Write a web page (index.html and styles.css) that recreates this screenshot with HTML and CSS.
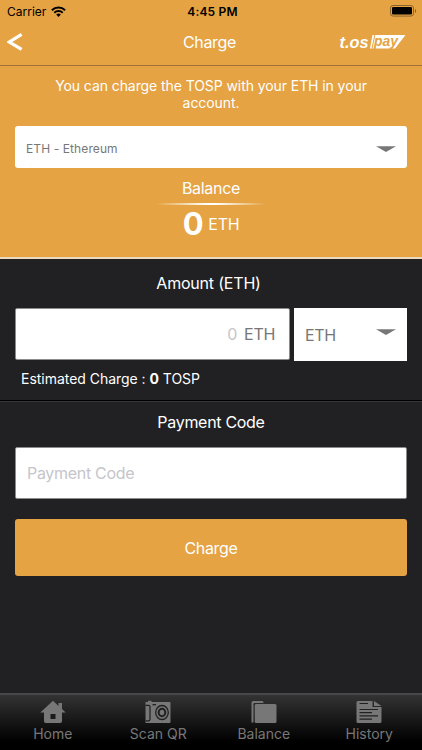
FILE: index.html
```html
<!DOCTYPE html>
<html lang="en">
<head>
  <meta charset="UTF-8">
  <meta name="viewport" content="width=device-width, initial-scale=1">
  <title>Charge</title>
  <link rel="stylesheet" href="styles.css">
</head>
<body>

<div class="status-bar">
  <div class="carrier">
    <span>Carrier</span>
    <svg class="wifi" width="15" height="11" viewBox="0 0 15 11" fill="none" stroke="#000">
      <path d="M0.9 4.2a9.4 9.4 0 0 1 13.2 0" stroke-width="2"/>
      <path d="M3.3 6.7a6 6 0 0 1 8.4 0" stroke-width="1.9"/>
      <path d="M5.2 8.6a3.3 3.3 0 0 1 4.6 0L7.5 10.9z" fill="#000" stroke="none"/>
    </svg>
  </div>
  <div class="time">4:45 PM</div>
  <div class="battery">
    <svg width="27" height="12" viewBox="0 0 27 12">
      <rect x="0.5" y="0.5" width="23" height="10.6" rx="2.6" fill="none" stroke="#8a632c"/>
      <rect x="2" y="2" width="20" height="7.6" rx="1.3" fill="#000"/>
      <path d="M25 4v4c1.6-.6 1.6-3.4 0-4z" fill="#8a632c"/>
    </svg>
  </div>
</div>

<header class="nav-bar">
  <button class="back" aria-label="Back">
    <svg width="16" height="18" viewBox="0 0 16 18">
      <path d="M14.6 1.4L2.4 9l12.2 7.4" fill="none" stroke="#fff" stroke-width="3.2"/>
    </svg>
  </button>
  <h1>Charge</h1>
  <svg class="logo" width="68" height="24" viewBox="0 0 68 24">
    <path d="M33.500 5H66.500L56 18.500H31z" fill="#fff"/>
    <path d="M35.800 5L33 18.500" stroke="#e5a343" stroke-width="1"/>
    <text class="logo-name" x="0.500" y="18" textLength="29" lengthAdjust="spacingAndGlyphs">t.os</text>
    <text class="logo-pay" x="35" y="15.800" textLength="24" lengthAdjust="spacingAndGlyphs">pay</text>
  </svg>
</header>

<section class="hero">
  <p class="intro">You can charge the TOSP with your ETH in your account.</p>
  <div class="coin-select">
    <span>ETH - Ethereum</span>
    <svg width="20" height="6" viewBox="0 0 20 6"><path d="M0 0.300h20L10 6z" fill="#777"/></svg>
  </div>
  <div class="balance-title">Balance</div>
  <div class="shine"></div>
  <div class="balance"><b>0</b><span>ETH</span></div>
</section>

<section class="amount">
  <h2>Amount (ETH)</h2>
  <div class="amount-row">
    <div class="field amount-field"><span class="placeholder">0</span><span>ETH</span></div>
    <div class="unit-select">
      <span>ETH</span>
      <svg width="20" height="6" viewBox="0 0 20 6"><path d="M0 0.300h20L10 6z" fill="#777"/></svg>
    </div>
  </div>
  <p class="estimate">Estimated Charge : <b>0</b> TOSP</p>
</section>

<section class="payment">
  <h2>Payment Code</h2>
  <div class="field code-field"><span class="placeholder">Payment Code</span></div>
  <button class="charge-button">Charge</button>
</section>

<nav class="tab-bar">
  <a class="tab">
    <svg width="26" height="24" viewBox="0 0 26 24" fill="#777">
      <path d="M13 0.800L0.300 12.500H4V21.200q0 1.800 1.800 1.800H20.200q1.800 0 1.800-1.800V12.500H25.700L22 9V3H18.500V6z"/>
      <path d="M10.500 14h5v5h-5z" fill="#1b1b1b"/>
    </svg>
    <span>Home</span>
  </a>
  <a class="tab">
    <svg width="26" height="24" viewBox="0 0 26 24" fill="#777">
      <path d="M2 2h1V0.700h3.500V2H24.500q1 0 1 1V22q0 1-1 1H0.500V2z"/>
      <g fill="none" stroke="#202020">
        <path d="M0.500 5.300H3.600q1.400 0 1.400 1.400V19.300q0 1.600-1.600 1.600H0.500" stroke-width="1.200"/>
        <path d="M7.500 4.700h3.500" stroke-width="1.300"/>
        <ellipse cx="17" cy="12.500" rx="6.300" ry="7" stroke-width="1.300"/>
        <ellipse cx="17" cy="12.500" rx="3.300" ry="3.800" stroke-width="2"/>
      </g>
    </svg>
    <span>Scan QR</span>
  </a>
  <a class="tab">
    <svg width="26" height="24" viewBox="0 0 26 24" fill="#777">
      <path d="M0.500 22.500V2.500q0-1.500 1.500-1.500H11q1.500 0 1.500 1.500V3H3.500q-1 0-1 1V22.500z"/>
      <path d="M5 4H24q1.500 0 1.500 1.500V21.500q0 1.500-1.500 1.500H5q-1.300 0-1.300-1.500V5.500Q3.700 4 5 4z"/>
    </svg>
    <span>Balance</span>
  </a>
  <a class="tab">
    <svg width="26" height="24" viewBox="0 0 26 24" fill="#777">
      <path d="M2 1H16.500V7H25.500V21.500q0 1.500-1.500 1.500H2Q0.500 23 0.500 21.500V2.500Q0.500 1 2 1z"/>
      <path d="M18 1L25.500 6H18z"/>
      <g fill="none" stroke="#202020" stroke-width="1.200">
        <path d="M3.500 3.500H12M3.500 9.500H22M3.500 12.700H16M3.500 15.900H22M3.500 19.100H16"/>
      </g>
    </svg>
    <span>History</span>
  </a>
</nav>

</body>
</html>
```
FILE: styles.css
```css
* {
  box-sizing: border-box;
}
body {
  margin: 0;
  width: 422px;
  height: 750px;
  display: flex;
  flex-direction: column;
  overflow: hidden;
  background: #212124;
  color: #fff;
  font-family: Inter, "Liberation Sans", sans-serif;
  font-size: 16px;
  letter-spacing: -0.3px;
}
h1, h2, p {
  margin: 0;
  font-weight: 400;
}
button {
  border: none;
  padding: 0;
  font: inherit;
  color: inherit;
  letter-spacing: inherit;
}
.status-bar {
  height: 22px;
  display: grid;
  grid-template-columns: 1fr auto 1fr;
  align-items: center;
  padding: 0 5px 0 7px;
  background: #e5a343;
  color: #000;
  font-size: 12px;
}
.carrier {
  display: flex;
  align-items: center;
  gap: 5px;
  letter-spacing: 0;
}
.time {
  font-weight: 600;
  padding-left: 1px;
  letter-spacing: 0.2px;
}
.battery {
  display: flex;
  justify-content: flex-end;
}
.nav-bar {
  height: 44px;
  display: grid;
  grid-template-columns: 1fr auto 1fr;
  align-items: center;
  padding: 0 15px 3px 7px;
  background: #e5a343;
  border-bottom: 1px solid #9d7232;
}
.nav-bar h1 {
  font-size: 16px;
  padding-left: 5px;
}
.back {
  display: flex;
  width: 30px;
  background: none;
}
.logo {
  justify-self: end;
}
.logo-name {
  font: italic 700 17px "Liberation Sans", sans-serif;
  letter-spacing: 0;
  fill: #fff;
}
.logo-pay {
  font: italic 700 14px "Liberation Sans", sans-serif;
  letter-spacing: 0;
  fill: #e5a343;
}
.hero {
  height: 193px;
  padding: 11px 15px 0;
  background: #e5a343;
  border-bottom: 2px solid #ead9bd;
  text-align: center;
}
.intro {
  padding: 0 35px;
  font-size: 14px;
  line-height: 17px;
  letter-spacing: -0.08px;
}
.coin-select {
  height: 42px;
  margin-top: 15px;
  padding: 3px 11px 0;
  display: flex;
  align-items: center;
  justify-content: space-between;
  background: #fff;
  border-radius: 3px;
  color: #777;
  font-size: 12px;
  letter-spacing: 0.1px;
}
.balance-title {
  margin-top: 10px;
  line-height: 20px;
}
.shine {
  width: 110px;
  height: 2px;
  margin: 5px auto 0;
  background: linear-gradient(90deg, transparent, #fff 45%, #fff 55%, transparent);
}
.balance {
  display: flex;
  justify-content: center;
  align-items: center;
  gap: 5px;
  height: 37px;
}
.balance b {
  font-size: 31px;
}
.amount {
  height: 142px;
  padding: 14px 15px 0;
  border-bottom: 1px solid #000;
}
h2 {
  font-size: 16px;
  line-height: 20px;
  text-align: center;
}
.amount h2 {
  padding-right: 5px;
  letter-spacing: -0.2px;
}
.amount-row {
  display: flex;
  gap: 4px;
  margin-top: 15px;
}
.field {
  display: flex;
  align-items: center;
  height: 52px;
  background: #fff;
  border: 1px solid #8b8b8b;
  border-radius: 2px;
  color: #777;
}
.placeholder {
  color: #c5c5ca;
}
.amount-field {
  flex: 1;
  justify-content: flex-end;
  gap: 7px;
  padding-right: 14px;
}
.unit-select {
  width: 113px;
  height: 53px;
  padding: 0 11px;
  display: flex;
  align-items: center;
  justify-content: space-between;
  background: #fff;
  color: #777;
}
.unit-select svg {
  margin-bottom: 6px;
}
.estimate {
  margin-top: 9px;
  padding-left: 6px;
  font-size: 14px;
  line-height: 18px;
  letter-spacing: -0.03px;
}
.payment {
  flex: 1;
  padding: 10px 15px 0;
  border-top: 1px solid #37373a;
}
.code-field {
  margin-top: 15px;
  padding-left: 11px;
}
.charge-button {
  width: 100%;
  height: 57px;
  margin-top: 20px;
  background: #e5a343;
  border-radius: 3px;
}
.tab-bar {
  height: 57px;
  display: grid;
  grid-template-columns: repeat(4, 1fr);
  border-top: 2px solid #48484b;
  background: linear-gradient(#333, #000 85%);
}
.tab {
  display: flex;
  flex-direction: column;
  align-items: center;
  gap: 1px;
  padding-top: 5px;
  color: #777;
  font-size: 14px;
  line-height: 18px;
  letter-spacing: 0;
}
```
